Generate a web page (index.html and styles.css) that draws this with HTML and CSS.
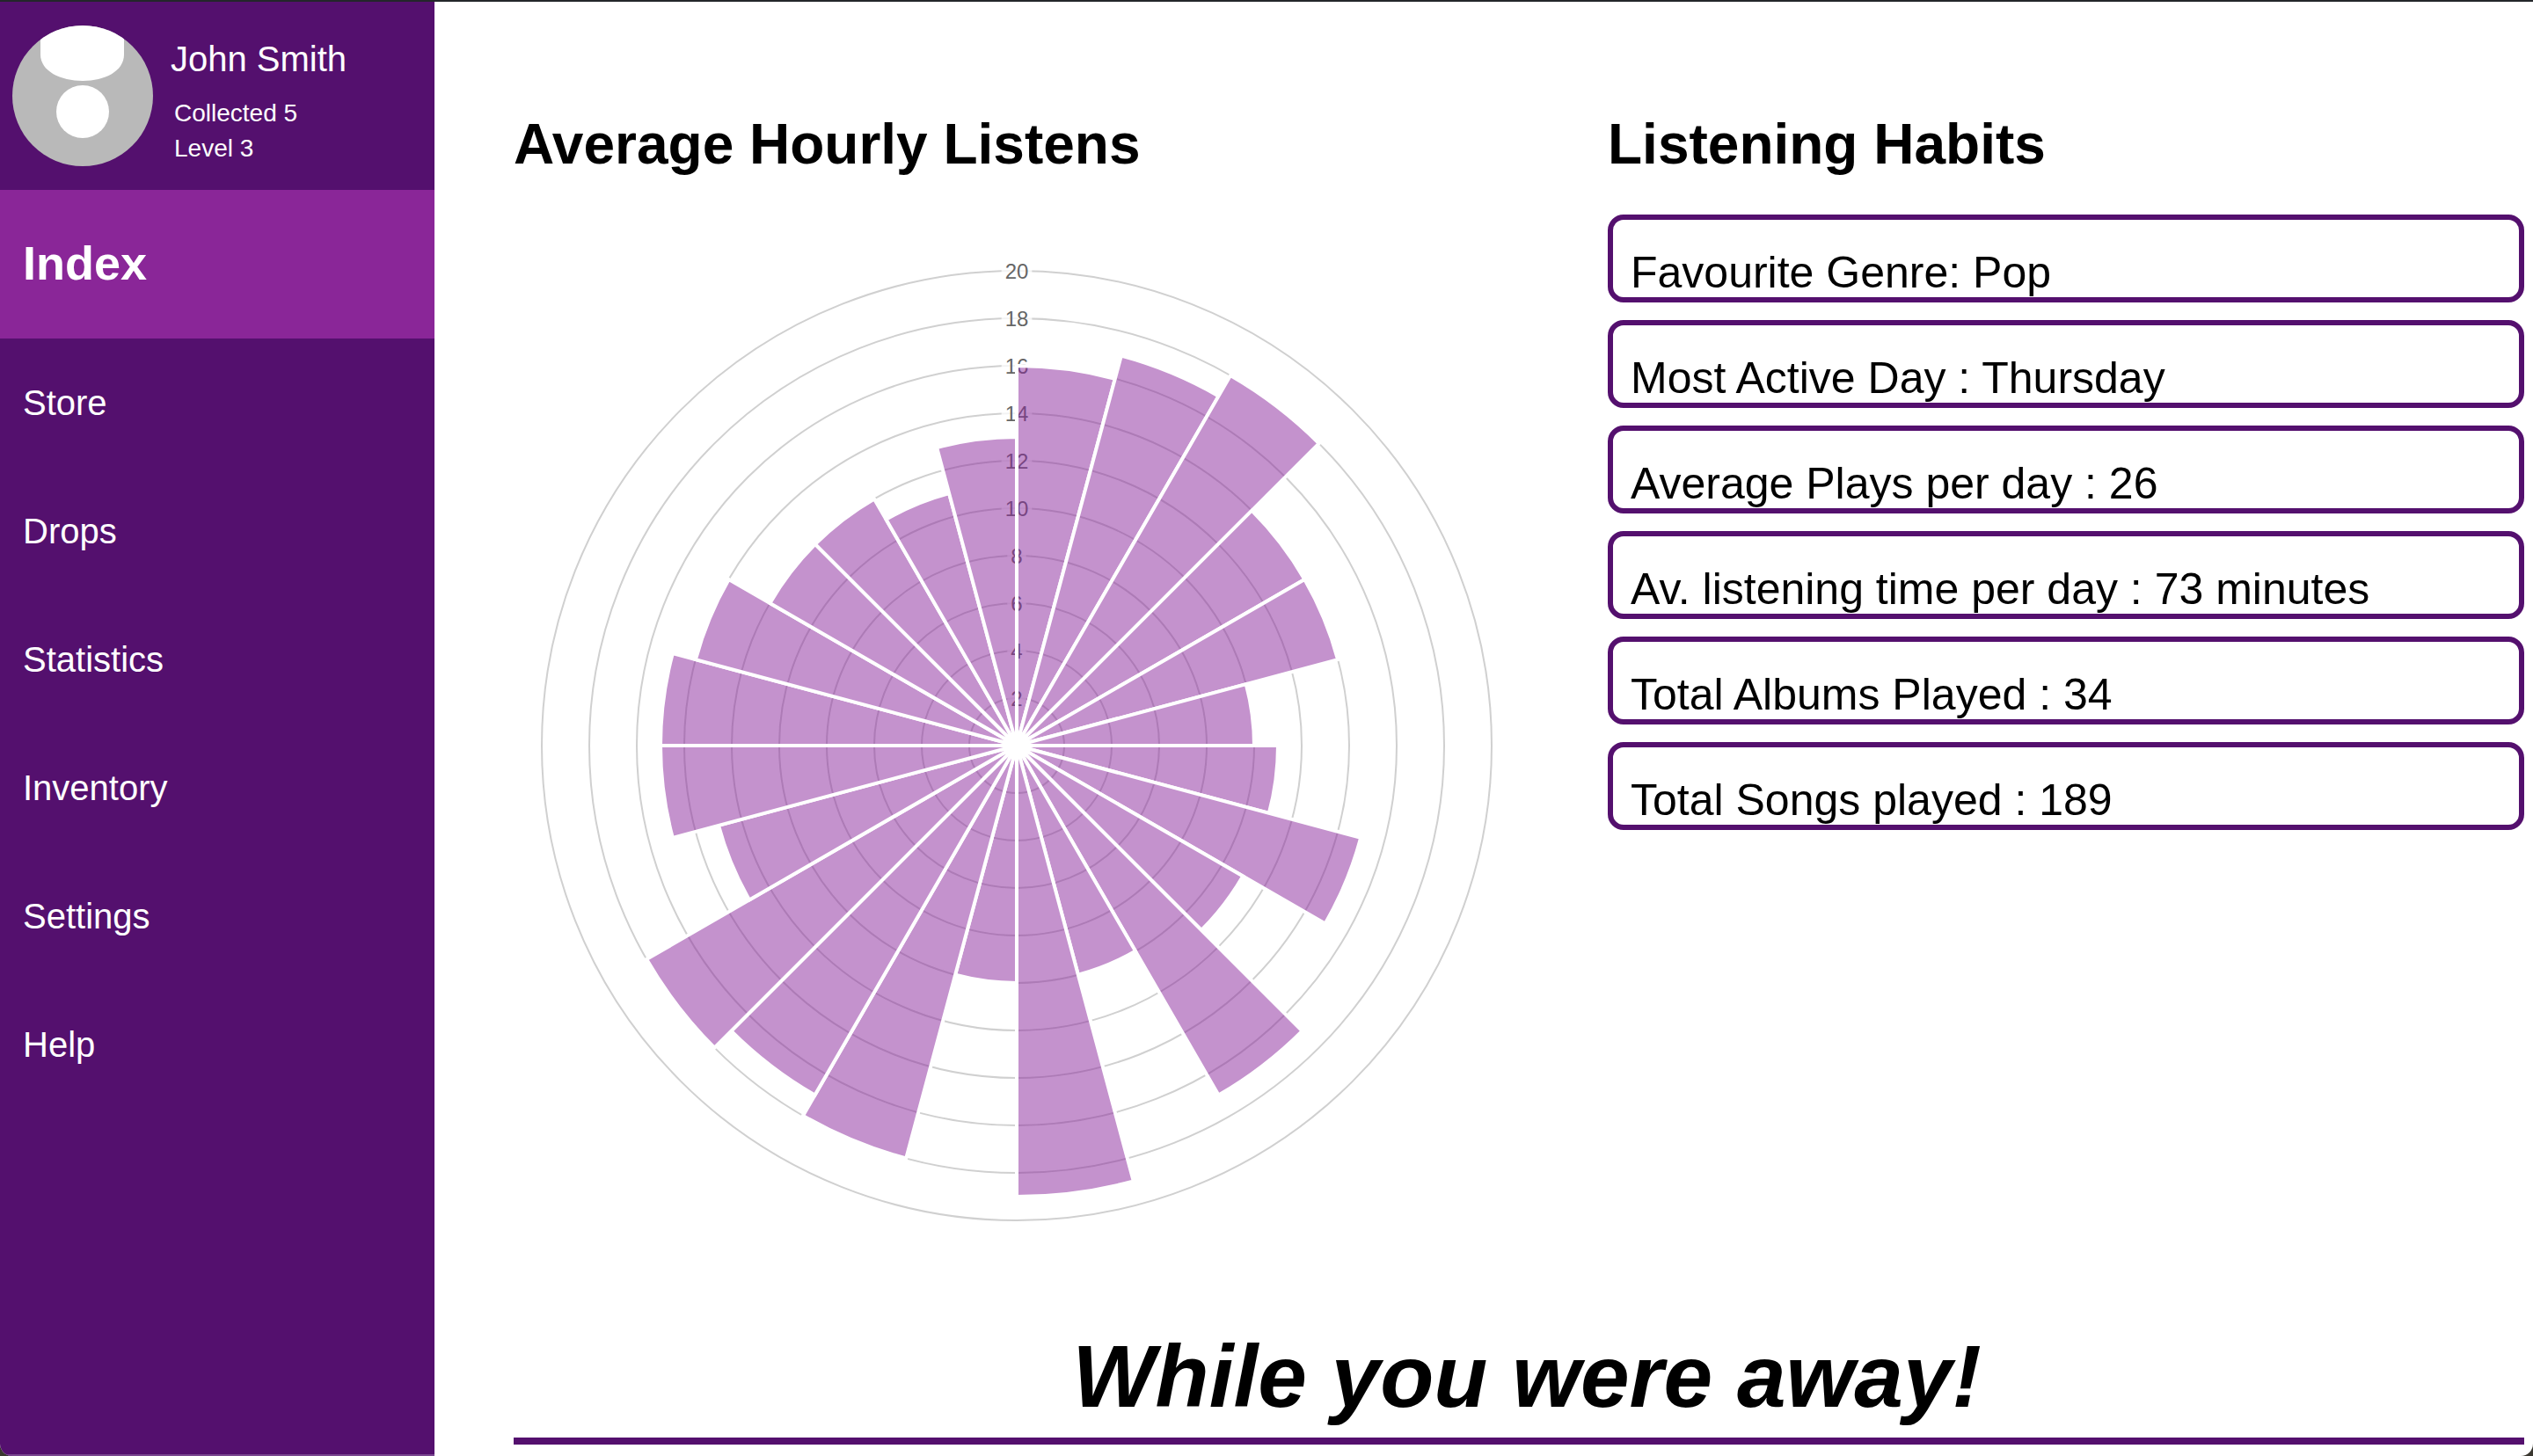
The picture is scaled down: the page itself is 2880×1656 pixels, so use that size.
FILE: index.html
```html
<!DOCTYPE html>
<html lang="en">
<head>
<meta charset="utf-8">
<title>Index</title>
<link rel="stylesheet" href="styles.css">
</head>
<body>
<div class="app">
  <aside class="sidebar">
    <header class="profile">
      <svg class="avatar" viewBox="0 0 160 160" aria-hidden="true">
        <defs><clipPath id="avatar-clip"><circle cx="80" cy="80" r="80"/></clipPath></defs>
        <circle cx="80" cy="80" r="80" fill="#b9b9b9"/>
        <g clip-path="url(#avatar-clip)" fill="#fff">
          <path d="M32 -5H127V33C127 52 105 63 80 63S32 52 32 33Z"/>
          <circle cx="80" cy="98" r="30"/>
        </g>
      </svg>
      <div class="profile-text">
        <div class="name">John Smith</div>
        <div class="meta">Collected 5</div>
        <div class="meta">Level 3</div>
      </div>
    </header>
    <nav class="nav">
      <a class="nav-active">Index</a>
      <ul class="nav-list">
        <li>Store</li>
        <li>Drops</li>
        <li>Statistics</li>
        <li>Inventory</li>
        <li>Settings</li>
        <li>Help</li>
      </ul>
    </nav>
  </aside>
  <main class="main">
    <div class="columns">
      <section class="chart-col">
        <h2 class="heading">Average Hourly Listens</h2>
        <svg id="polar" class="polar" viewBox="0 0 1140 1140" role="img" aria-label="Average hourly listens polar chart"></svg>
      </section>
      <section class="habits-col">
        <h2 class="heading">Listening Habits</h2>
        <ul class="habits">
          <li class="habit">Favourite Genre: Pop</li>
          <li class="habit">Most Active Day : Thursday</li>
          <li class="habit">Average Plays per day : 26</li>
          <li class="habit">Av. listening time per day : 73 minutes</li>
          <li class="habit">Total Albums Played : 34</li>
          <li class="habit">Total Songs played : 189</li>
        </ul>
      </section>
    </div>
    <h1 class="away">While you were away!</h1>
  </main>
</div>
<script src="chart.js"></script>
</body>
</html>
```

FILE: styles.css
```css
* { box-sizing: border-box; }
html, body { margin: 0; height: 100%; }
body {
  background: #3a3730;
  color: #000;
  font-family: "Liberation Sans", Arial, sans-serif;
  overflow: hidden;
}
.app {
  display: flex;
  height: 1656px;
  background: #fff;
  border-top: 2px solid #23262a;
  border-radius: 0 0 14px 14px;
  overflow: hidden;
}
.sidebar {
  flex: 0 0 494px;
  background: #54106e;
  border-bottom: 2px solid #7a4690;
  color: #fff;
}
.profile {
  display: flex;
  height: 214px;
  padding: 27px 0 0 14px;
}
.avatar { width: 160px; height: 160px; flex: none; }
.profile-text { padding: 14px 0 0 20px; }
.name { font-size: 40px; line-height: 48px; margin-bottom: 18px; }
.meta { font-size: 28px; line-height: 40px; margin-left: 4px; }
.nav-active {
  display: flex;
  align-items: center;
  height: 169px;
  padding: 0 0 3px 26px;
  background: #8a2698;
  font-size: 54px;
  font-weight: 700;
}
.nav-list {
  list-style: none;
  margin: 0;
  padding: 0 0 0 26px;
}
.nav-list li {
  height: 146px;
  font-size: 40px;
  line-height: 146px;
}
.main {
  flex: 1;
  padding: 0 10px 0 90px;
  display: flex;
  flex-direction: column;
}
.columns { display: flex; flex: 1; }
.chart-col { flex: 0 0 1244px; }
.habits-col { flex: 1; }
.heading {
  margin: 125px 0 0;
  font-size: 64px;
  line-height: 74px;
  font-weight: 700;
}
.polar {
  display: block;
  width: 1140px;
  height: 1140px;
  margin: 77px 0 0 2px;
}
.habits { list-style: none; margin: 43px 0 0; padding: 0; }
.habit {
  height: 100px;
  margin-bottom: 20px;
  padding: 31px 0 0 20px;
  border: 6px solid #54106e;
  border-radius: 18px;
  font-size: 50px;
  line-height: 58px;
  white-space: nowrap;
}
.away {
  margin: 0 0 13px;
  padding: 0 0 15px 18px;
  border-bottom: 8px solid #54106e;
  text-align: center;
  font-size: 100px;
  line-height: 110px;
  font-weight: 700;
  font-style: italic;
}
.grid-ring { fill: none; stroke: #d0d0d0; stroke-width: 2; }
.tick-back { fill: rgba(255, 255, 255, 0.75); }
.tick-label {
  font-family: "Liberation Sans", Arial, sans-serif;
  font-size: 24px;
  fill: #666;
  text-anchor: middle;
  dominant-baseline: central;
}
.wedge {
  fill: rgba(137, 38, 155, 0.5);
  stroke: #fff;
  stroke-width: 4;
  stroke-linejoin: miter;
}
```

FILE: chart.js
```js
(function () {
  var values = [16, 17, 18, 14, 14, 10, 11, 15, 11, 17, 10, 19,
                10, 18, 17, 18, 13, 15, 15, 14, 12, 12, 11, 13];
  var svg = document.getElementById('polar');
  var NS = 'http://www.w3.org/2000/svg';
  var C = 570, UNIT = 27;

  function el(name, attrs, text) {
    var node = document.createElementNS(NS, name);
    Object.keys(attrs).forEach(function (k) { node.setAttribute(k, attrs[k]); });
    if (text) node.textContent = text;
    svg.appendChild(node);
  }
  function pt(r, deg) {
    var a = (deg - 90) * Math.PI / 180;
    return (C + r * Math.cos(a)).toFixed(2) + ' ' + (C + r * Math.sin(a)).toFixed(2);
  }

  for (var v = 2; v <= 20; v += 2) {
    el('circle', { 'class': 'grid-ring', cx: C, cy: C, r: v * UNIT });
  }
  for (var t = 2; t <= 20; t += 2) {
    var label = String(t);
    var w = label.length * 13.35 + 8;
    el('rect', { 'class': 'tick-back', x: C - w / 2, y: C - t * UNIT - 16, width: w, height: 32 });
    el('text', { 'class': 'tick-label', x: C, y: C - t * UNIT }, label);
  }
  values.forEach(function (val, i) {
    var r = val * UNIT, a0 = i * 15, a1 = a0 + 15;
    el('path', {
      'class': 'wedge',
      d: 'M' + C + ' ' + C + 'L' + pt(r, a0) + 'A' + r + ' ' + r + ' 0 0 1 ' + pt(r, a1) + 'Z'
    });
  });
})();
```
